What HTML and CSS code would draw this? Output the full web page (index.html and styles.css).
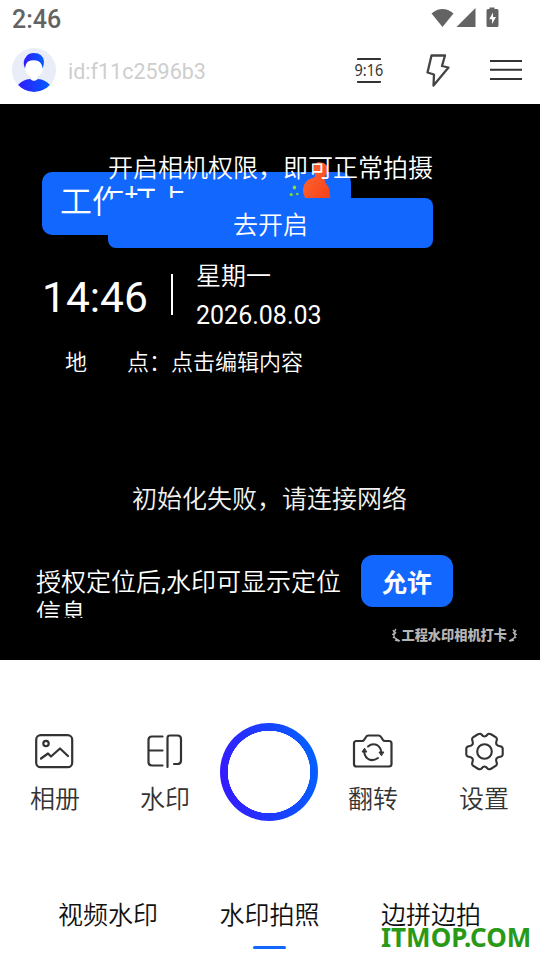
FILE: index.html
```html
<!DOCTYPE html>
<html lang="zh-CN">
<head>
<meta charset="utf-8">
<title>水印相机</title>
<link rel="stylesheet" href="styles.css">
</head>
<body>
<div class="statusbar">
  <span class="clock">2:46</span>
  <svg class="status-icons" width="70" height="22" viewBox="0 0 70 22" fill="#636363">
    <path d="M.5 5.4Q11.500-3.400 22.500 5.400L11.500 19Z"/>
    <path d="M44.500 0V19H25.500Z"/>
    <path fill-rule="evenodd" d="M58.500 1V-.500H63.500V1H66q1.500 0 1.500 1.500V17.500q0 1.500-1.500 1.500H57q-1.500 0-1.500-1.500V2.500Q55.500 1 57 1ZM62 4.500L58.200 11.200H61V16L65 9H62Z"/>
  </svg>
</div>
<header class="topbar">
  <svg class="avatar" width="44" height="44" viewBox="0 0 44 44">
    <defs>
      <linearGradient id="g"><stop offset="0" stop-color="#331aff"/><stop offset="1" stop-color="#005eff"/></linearGradient>
      <clipPath id="c"><circle cx="22" cy="22" r="22"/></clipPath>
    </defs>
    <circle cx="22" cy="22" r="22" fill="#e8edf7"/>
    <ellipse cx="22" cy="20.500" rx="8.800" ry="9" fill="#fff"/>
    <path d="M13 20.500Q10 13 14 9q2-4 8-4 9 0 10 8.500 0 4-1.500 7-.5-5-3.500-7-5.500-2.500-11 0-2.500 2-3 7Z" fill="url(#g)"/>
    <path d="M6 37Q11 31.500 18 31q4 3.500 8 0 7 .5 12 6-6 7-16 7T6 37Z" fill="url(#g)" clip-path="url(#c)"/>
    <path d="M19 29h6v2q-1 1.500-3 1.500t-3-1.500Z" fill="#fff"/>
  </svg>
  <span class="user-id">id:f11c2596b3</span>
  <div class="ratio"><span>9:16</span></div>
  <svg class="flash" width="26" height="36" viewBox="0 0 26 36" fill="none" stroke="#444" stroke-width="2.300" stroke-linejoin="round"><path d="M6.500 2.500H20L17 13L23.500 14.500L8.500 32.500L9 21.500L2.500 19.500Z"/></svg>
  <svg class="menu" width="32" height="22" viewBox="0 0 32 22" stroke="#333" stroke-width="2"><path d="M0 2H32M0 10.800H32M0 20H32"/></svg>
</header>
<main class="preview">
  <div class="tag">工作打卡
    <svg class="stamp" width="44" height="46" viewBox="0 0 44 46">
      <defs><linearGradient id="r" x1="0" y1="0" x2="1" y2="1"><stop offset="0" stop-color="#ff6a33"/><stop offset="1" stop-color="#f53c16"/></linearGradient></defs>
      <path d="M28 5Q30 0 35 1.500Q41 2 42 8Q42.500 12 39 15Q38 19 39.500 22Q44 27 44 33V46H26Q16 35 17 28Q18 20 25 17.500Q31 17 28 11Z" fill="url(#r)"/>
      <ellipse cx="8.500" cy="26.500" rx="1.700" ry="2" fill="#8fe01c"/><circle cx="5.200" cy="33.500" r="1.500" fill="#8fe01c"/><circle cx="11.300" cy="33" r="1.200" fill="#8fe01c"/>
    </svg>
  </div>
  <div class="when">
    <span class="time">14:46</span>
    <div class="date"><span class="day">星期一</span><span>2026.08.03</span></div>
  </div>
  <div class="place"><span>地</span><span>点：点击编辑内容</span></div>
  <p class="init">初始化失败，请连接网络</p>
  <div class="location"><p>授权定位后<span class="comma">,</span>水印可显示定位信息</p><button class="allow">允许</button></div>
  <div class="brand">
    <svg width="9" height="14" viewBox="0 0 9 14" fill="none" stroke="#b5b5b5" stroke-width="1.300"><path d="M4 1Q0 6 3 10l5 3M1 2l1 2M0 6l2 1M4 4L2 7M2 10l-1-1M3 12l4 1"/></svg>
    <span>工程水印相机打卡</span>
    <svg class="flip" width="9" height="14" viewBox="0 0 9 14" fill="none" stroke="#b5b5b5" stroke-width="1.300"><path d="M4 1Q0 6 3 10l5 3M1 2l1 2M0 6l2 1M4 4L2 7M2 10l-1-1M3 12l4 1"/></svg>
  </div>
  <div class="permission"><p>开启相机权限，即可正常拍摄</p><button class="open">去开启</button></div>
</main>
<section class="actions">
  <div class="action">
    <svg width="44" height="40" viewBox="0 0 44 40" fill="none" stroke="#333" stroke-width="2.200" stroke-linecap="round" stroke-linejoin="round"><rect x="3.200" y="4.200" width="36" height="32" rx="4.500"/><circle cx="13" cy="12.500" r="2.700"/><path d="M8 27.500L15 22.500L18 25.500L27 17.500L35 25"/></svg>
    <span>相册</span>
  </div>
  <div class="action">
    <svg width="44" height="40" viewBox="0 0 44 40" fill="none" stroke="#333" stroke-width="2.200" stroke-linecap="round" stroke-linejoin="round"><path d="M19.500 5.500H9Q5.500 5.500 5.500 9V31Q5.500 34.500 9 34.500H19.500M5.500 19.500H19.500M24.500 36V7Q24.500 4.500 27 4.500H34.500Q38 4.500 38 8V29.500Q38 33 34.500 33H31"/></svg>
    <span>水印</span>
  </div>
  <div class="shutter"></div>
  <div class="action">
    <svg width="44" height="40" viewBox="0 0 44 40" fill="none" stroke="#333" stroke-width="2.200" stroke-linecap="round" stroke-linejoin="round"><path d="M5.500 10H11Q12.500 10 13 9L15 6Q15.700 4.500 17.500 4.500H27.500Q29 4.500 30 6L32 9Q32.500 10 34 10H38Q40.500 10 40.500 12.500V33Q40.500 35.500 38 35.500H5.500Q3 35.500 3 33V12.500Q3 10 5.500 10Z"/><path stroke-width="2" d="M17 15.500Q21 12 26 14Q30.500 17 30.300 22M27 27Q21 31 16.500 27.500Q13 24.500 13.200 19.500"/><path fill="#333" stroke-width="1" d="M13.300 17.500L11 21H15.500ZM30.300 24.500L28 21H32.500Z"/></svg>
    <span>翻转</span>
  </div>
  <div class="action">
    <svg width="44" height="40" viewBox="0 0 44 40" fill="none" stroke="#333" stroke-width="2.100" stroke-linejoin="round"><circle cx="22.500" cy="20.500" r="7.300"/><path d="M15.500 3.500Q18.500 2 19.500 3.500Q22.500 7.500 25.500 3.500Q26.500 2 29.500 3.500L34 6.300Q35.500 7.500 34.500 10Q33 14.500 38 15.200Q40.500 15.500 40.700 17.500V23.500Q40.500 25.500 38 25.800Q33 26.500 34.500 31Q35.500 33.500 34 34.700L29.500 37.500Q26.500 39 25.500 37.500Q22.500 33.500 19.500 37.500Q18.500 39 15.500 37.500L11 34.700Q9.500 33.500 10.500 31Q12 26.500 7 25.800Q4.500 25.500 4.300 23.500V17.500Q4.500 15.500 7 15.200Q12 14.500 10.500 10Q9.500 7.500 11 6.300Z"/></svg>
    <span>设置</span>
  </div>
</section>
<nav class="tabs">
  <span>视频水印</span><span class="active">水印拍照</span><span>边拼边拍</span>
  <b class="site">ITMOP.COM</b>
</nav>
</body>
</html>
```
FILE: styles.css
```css
* { box-sizing: border-box; }
body { margin: 0; width: 540px; height: 960px; overflow: hidden; background: #fff; font: 350 25px/36px "Noto Sans CJK SC", sans-serif; display: flex; flex-direction: column; }
p { margin: 0; }
button { border: 0; padding: 0; background: #1267ff; color: #fff; font: inherit; text-align: center; }
.statusbar { height: 38px; padding: 0 39px 0 12px; display: flex; justify-content: space-between; }
.clock { font: 500 25px/40px Roboto, sans-serif; color: #636363; }
.status-icons { margin-top: 8px; overflow: visible; }
.topbar { height: 66px; padding: 0 18px 0 12px; display: flex; align-items: center; }
.avatar { margin-top: -2px; }
.user-id { font: 400 21.500px/30px Roboto, sans-serif; color: #cecece; margin: 1px 0 0 12px; }
.ratio { font: 400 17px/21px "Noto Sans", sans-serif; color: #333; width: 24px; height: 25px; margin: 0 2px 2px auto; border: solid #333; border-width: 2px 0; border-radius: 1px; display: flex; justify-content: center; }
.ratio span { transform: translateY(-1px) scaleX(.85); }
.flash { margin: 0 39px 0 42px; }
.menu { margin-bottom: 2px; }
.preview { height: 556px; background: #000; color: #fff; position: relative; padding: 68px 0 0 42px; }
.tag { width: 309px; height: 63px; border-radius: 10px; background: #1267ff; padding-left: 18px; font-size: 32px; line-height: 55px; position: relative; }
.stamp { position: absolute; right: 21px; top: -11px; }
.when { display: flex; align-items: center; height: 80px; margin-top: 20px; }
.time { font: 400 42.500px/50px Roboto, sans-serif; width: 129px; margin-top: 5px; }
.date { display: flex; flex-direction: column; font: 400 25px/40px Roboto, sans-serif; padding: 1px 0 0 25px; position: relative; }
.date::before { content: ""; position: absolute; left: 0; top: 19px; width: 2px; height: 41px; background: #fff; }
.day { font-family: "Noto Sans CJK SC", sans-serif; font-weight: 350; line-height: 36px; margin-bottom: 4px; }
.place { display: flex; gap: 40px; font-size: 22px; line-height: 32px; margin: 9px 0 0 23px; }
.init { margin: 103px 43px 0 0; text-align: center; color: #f2f2f2; }
.location { display: flex; margin: 40px 0 0 -6px; }
.location p { width: 306px; height: 63px; overflow: hidden; line-height: 28px; padding-top: 11px; }
.comma { font-family: Roboto, sans-serif; font-weight: 400; }
.allow { width: 92px; height: 52px; border-radius: 12px; margin-left: 19px; font-weight: 700; line-height: 50px; }
.brand { display: flex; justify-content: flex-end; align-items: center; gap: 1px; height: 16px; margin: 9px 23px 0 0; font-size: 13.200px; font-weight: 900; line-height: 16px; color: #b5b5b5; }
.flip { transform: scaleX(-1); }
.permission { position: absolute; left: 108px; top: 44px; width: 325px; white-space: nowrap; }
.open { display: block; width: 325px; height: 50px; border-radius: 8px; margin-top: 14px; }
.actions { height: 223px; padding: 63px 21px 0 20px; display: flex; color: #333; }
.action { width: 70px; display: flex; flex-direction: column; align-items: center; padding-top: 8px; }
.action span { margin-top: 8px; line-height: 36px; }
.action:nth-child(2) { margin-left: 40px; }
.action:nth-child(4) { margin-left: 20px; }
.action:nth-child(5) { margin-left: 41px; }
.shutter { width: 98px; height: 98px; border-radius: 50%; margin-left: 20px; background: radial-gradient(circle, #fff 41px, transparent 41.500px), linear-gradient(80deg, #3815ff, #0066ff); }
.tabs { height: 77px; display: flex; justify-content: space-between; padding: 12px 59px 0 58px; color: #111; position: relative; }
.active { position: relative; }
.active::after { content: ""; position: absolute; left: 34px; top: 51px; width: 33px; height: 3px; border-radius: 2px; background: #1267ff; }
.site { position: absolute; left: 381px; top: 36px; font: 700 26px/36px "Noto Sans", sans-serif; color: #299a17; }
```
